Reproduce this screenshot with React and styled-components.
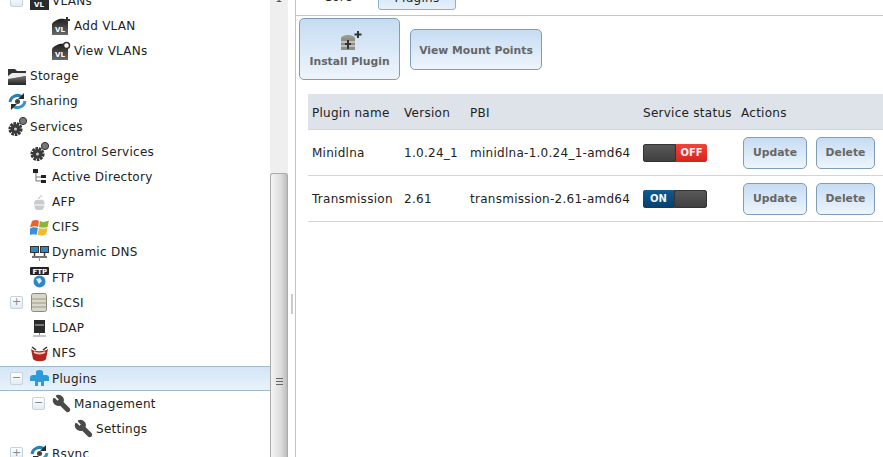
import React from "react";
import styled, { createGlobalStyle } from "styled-components";
import { Wrench } from "lucide-react";

const Global = createGlobalStyle`
  html, body { margin: 0; padding: 0; background: #fff; }
  body { font-family: "DejaVu Sans", Verdana, sans-serif; font-size: 12px; letter-spacing: 0.27px; color: #222; }
`;

const Page = styled.div`
  width: 883px;
  height: 457px;
  display: flex;
  overflow: hidden;
  background: #fff;
`;
const Sidebar = styled.div`
  width: 270px;
  flex: none;
  overflow: hidden;
`;
const TreeList = styled.div`
  margin-top: -12px;
`;
const Row = styled.div`
  height: 25.2px;
  box-sizing: border-box;
  display: flex;
  align-items: center;
  padding-left: ${(p) => p.$indent}px;
  ${(p) => p.$selected && `
    background: linear-gradient(#d3e5f6, #e9f2fb);
    border-top: 1px solid #9fb8d2;
    border-bottom: 1px solid #9fb8d2;
    padding-top: 1px;
  `}
`;
const Expander = styled.span`
  width: 13px;
  height: 13px;
  box-sizing: border-box;
  flex: none;
  margin-right: 7px;
  border: 1px solid #c6d2de;
  border-radius: 2px;
  background: linear-gradient(#fff, #e4ebf2);
  color: #7f8b97;
  font-size: 11px;
  letter-spacing: 0;
  line-height: 10px;
  text-align: center;
`;
const IconSlot = styled.span`
  width: 19px;
  height: 19px;
  flex: none;
  margin-right: 3px;
  display: flex;
  align-items: center;
  justify-content: center;
`;
const Label = styled.span`
  white-space: nowrap;
`;
const Scrollbar = styled.div`
  width: 18px;
  flex: none;
  background: #efefef;
  display: flex;
  flex-direction: column;
  align-items: center;
`;
const ArrowCap = styled.span`
  width: 0;
  height: 0;
  margin-bottom: 171px;
  border-left: 3px solid transparent;
  border-right: 3px solid transparent;
  border-bottom: 2px solid #555;
`;
const Thumb = styled.div`
  width: 100%;
  height: 284px;
  flex: none;
  box-sizing: border-box;
  border: 1px solid #aaa;
  border-bottom: none;
  border-radius: 3px 3px 0 0;
  background: linear-gradient(90deg, #f4f4f4, #dedede 60%, #bdbdbd);
  display: flex;
  align-items: center;
  justify-content: center;
`;
const Grip = styled.span`
  width: 7px;
  height: 8px;
  margin-top: 132px;
  background: repeating-linear-gradient(#666 0 1px, transparent 1px 3px);
`;
const Splitter = styled.div`
  width: 8px;
  flex: none;
  box-sizing: border-box;
  display: flex;
  align-items: center;
  justify-content: center;
  border-right: 1px solid #c4c4c4;
  background: #fff;
`;
const SplitterHandle = styled.span`
  width: 2px;
  height: 20px;
  margin-top: 150px;
  background: #cbcbcb;
`;
const Main = styled.div`
  flex: 1;
  min-width: 0;
  overflow: hidden;
`;
const Tabs = styled.div`
  height: 30px;
  margin-top: -14px;
  box-sizing: border-box;
  display: flex;
  align-items: flex-start;
  gap: 1px;
  padding-left: 3px;
  border-bottom: 1px solid #c4c4c4;
`;
const Tab = styled.div`
  width: 78px;
  height: 24px;
  box-sizing: border-box;
  flex: none;
  text-align: center;
  line-height: 22px;
  ${(p) => p.$active && `
    border: 1px solid #8fb0cc;
    border-radius: 3px;
    background: linear-gradient(#cfe3f6, #e6f0fa);
  `}
`;
const Toolbar = styled.div`
  display: flex;
  align-items: center;
  gap: 10px;
  padding: 2px 0 0 3px;
`;
const ActionButton = styled.button`
  font-family: "DejaVu Sans", Verdana, sans-serif;
  font-size: 10.8px;
  font-weight: bold;
  color: #666;
  border: 1px solid #7d9db8;
  border-radius: 5px;
  background: linear-gradient(#c6dcf2, #eef5fc);
  padding: ${(p) => p.$pt || 0}px 0 0;
  box-sizing: border-box;
  width: ${(p) => p.$w}px;
  height: ${(p) => p.$h}px;
  display: flex;
  flex-direction: column;
  align-items: center;
  justify-content: center;
  white-space: nowrap;
`;
const TableWrap = styled.div`
  margin: 14px 0 0 12px;
`;
const Grid = styled.div`
  display: grid;
  grid-template-columns: 92px 66px 173px 98px 1fr;
  align-items: center;
  box-sizing: border-box;
  height: ${(p) => p.$h}px;
  padding: ${(p) => (p.$head ? "2px" : "0")} 0 0 4px;
  background: ${(p) => (p.$head ? "#dde3e9" : "#fff")};
  border-bottom: 1px solid ${(p) => (p.$head ? "#cfd5db" : "#d4d4d4")};
`;
const Cell = styled.div`
  white-space: nowrap;
`;
const Actions = styled.div`
  display: flex;
  gap: 9px;
  margin-left: 2px;
`;
const Switch = styled.div`
  width: 64px;
  height: 18px;
  border-radius: 3px;
  overflow: hidden;
  display: flex;
  flex-direction: ${(p) => (p.$on ? "row" : "row-reverse")};
  background: #4a4a4a;
`;
const SwitchLabel = styled.span`
  width: 31px;
  background: ${(p) => (p.$on ? "linear-gradient(#0f5a90, #04406c)" : "linear-gradient(#f2443a, #d8231c)")};
  color: #f4f4f4;
  font-size: 10px;
  font-weight: bold;
  letter-spacing: 0;
  line-height: 18px;
  text-align: center;
`;
const SwitchKnob = styled.span`
  flex: 1;
  background: linear-gradient(#5a5a5a, #3e3e3e);
  box-shadow: inset 0 0 0 1px #333;
  border-radius: 3px;
`;
const HiddenDefs = styled.svg`
  position: absolute;
`;

const IconDefs = () => (
  <HiddenDefs width="0" height="0">
    <defs>
      <linearGradient id="vlanFill" x1="0" y1="0" x2="0" y2="1">
        <stop offset="0" stopColor="#1e1e1e" />
        <stop offset="1" stopColor="#6a6a6a" />
      </linearGradient>
      <linearGradient id="folderFill" x1="0" y1="0" x2="0" y2="1">
        <stop offset="0" stopColor="#777" />
        <stop offset="1" stopColor="#222" />
      </linearGradient>
    </defs>
  </HiddenDefs>
);

const Vlan = ({ badge }) => (
  <svg width="19" height="19" viewBox="0 0 19 19">
    {badge ? (
      <path d="M0 8c2-4 9-6 12-5l4 4v12H0z" fill="url(#vlanFill)" />
    ) : (
      <rect x="0" y="0" width="19" height="19" fill="#2b2b2b" />
    )}
    <text x={badge ? 3 : 4} y="16" fontSize="7" fontWeight="bold" letterSpacing="0" fill="#fff" fontFamily="DejaVu Sans">VL</text>
    {badge === "add" && <path d="M15 1v6M12 4h6" stroke="#333" strokeWidth="2" />}
    {badge === "view" && <circle cx="14.500" cy="4.500" r="3" fill="#fff" stroke="#333" strokeWidth="1.500" />}
  </svg>
);
const Folder = () => (
  <svg width="19" height="19" viewBox="0 0 19 19">
    <path d="M0 2h7l2 2h9v14H0z" fill="#333" />
    <path d="M0 9l4-3h14v3L3 12H0z" fill="#ececec" />
    <path d="M0 12l18-3v9H0z" fill="url(#folderFill)" />
  </svg>
);
const Sync = () => (
  <svg width="19" height="19" viewBox="0 0 19 19" fill="none">
    <path d="M2 10a7.500 7.500 0 0 1 12-5" stroke="#2a7fb5" strokeWidth="3" />
    <path d="M17 9a7.500 7.500 0 0 1-12 5" stroke="#3a94c9" strokeWidth="3" />
    <path d="M16 1v6h-6z" fill="#2b2b2b" />
    <path d="M3 18v-6h6z" fill="#2b2b2b" />
    <circle cx="9.500" cy="9.500" r="2.500" fill="#444" />
  </svg>
);
const Gears = () => (
  <svg width="19" height="19" viewBox="0 0 19 19">
    <circle cx="7.500" cy="12" r="5.800" fill="none" stroke="#333" strokeWidth="2.500" strokeDasharray="2.600 .9" />
    <circle cx="7.500" cy="12" r="5" fill="#3a3a3a" />
    <circle cx="7.500" cy="12" r="1.500" fill="#ccc" />
    <circle cx="15" cy="4" r="3.600" fill="#777" stroke="#333" />
  </svg>
);
const Directory = () => (
  <svg width="19" height="19" viewBox="0 0 19 19" fill="none">
    <path d="M6 5v9h8M6 10h8" stroke="#777" />
    <rect x="3" y="2" width="5" height="4" fill="#222" />
    <rect x="11" y="8" width="5" height="3" fill="#222" />
    <rect x="11" y="13" width="5" height="3" fill="#222" />
  </svg>
);
const Apple = () => (
  <svg width="19" height="19" viewBox="0 0 19 19">
    <path d="M4 10c0-3 3-4 5.500-3 2.500-1 5 0 5 3 0 3-1 7-3 7H7c-2 0-3-4-3-7z" fill="#c8cccf" />
    <path d="M4 12h11" stroke="#eceeef" strokeWidth="1.500" />
    <path d="M9 6c0-2 1-3 3-3" stroke="#b0b4b8" fill="none" />
  </svg>
);
const Windows = () => (
  <svg width="19" height="19" viewBox="0 0 19 19">
    <path d="M2 3c3-1.500 5-1 7 0L8 9C6 8 3 8 0 9.500z" fill="#e8622c" />
    <path d="M10 3c3 1.500 5 1 9-.5l-1.500 6.500c-3 1-5.500 1-8.500 0z" fill="#8db53c" />
    <path d="M0 10.500c3-1.500 5-1.500 8-.5l-1.500 7c-2-1-4-1-7.500.5z" fill="#3b8fd6" />
    <path d="M9 10c3 1 5.500 1 8.500 0L16 16.500c-3 1.500-6 1-8.500.5z" fill="#f0bc2e" />
  </svg>
);
const Network = () => (
  <svg width="19" height="19" viewBox="0 0 19 19">
    <rect x=".5" y="3.500" width="8" height="6" fill="#3487bd" stroke="#333" />
    <rect x="10.500" y="3.500" width="8" height="6" fill="#3487bd" stroke="#333" />
    <path d="M4.500 10v3M14.500 10v3M2 14h15" stroke="#444" strokeWidth="1.500" />
    <path d="M9.500 14v4" stroke="#999" />
  </svg>
);
const Ftp = () => (
  <svg width="19" height="21" viewBox="0 0 19 21">
    <rect x="0" y="0" width="19" height="8" rx="1" fill="#222" />
    <text x="2.500" y="7" fontSize="7" fontWeight="bold" letterSpacing="0" fill="#fff" fontFamily="DejaVu Sans">FTP</text>
    <circle cx="9.500" cy="14.500" r="6" fill="#2f86c4" />
    <path d="M6 12l4-1 2 3-3 3z" fill="#d7ecf8" />
  </svg>
);
const Disk = () => (
  <svg width="19" height="19" viewBox="0 0 19 19">
    <rect x="1.500" y=".5" width="15" height="18" rx="2" fill="#d9d7c6" stroke="#8a8a80" />
    <path d="M2 6h14M2 10h14M2 14h14" stroke="#9a9a8e" />
  </svg>
);
const Server = () => (
  <svg width="19" height="19" viewBox="0 0 19 19">
    <rect x="4" y="1" width="11" height="13" fill="#2b2b2b" />
    <rect x="5" y="5" width="9" height="2" fill="#777" />
    <path d="M9.500 14v2M3 17h13" stroke="#888" />
  </svg>
);
const Nfs = () => (
  <svg width="19" height="19" viewBox="0 0 19 19">
    <path d="M1 5c3 3 13 3 17 0l-2 10c-1 3-11 3-13 0z" fill="#b3261e" />
    <path d="M2 3l4 3M17 3l-4 3" stroke="#333" strokeWidth="1.500" />
    <path d="M4 8c3 2 8 2 11 0" stroke="#f1cdc8" strokeWidth="2" fill="none" />
  </svg>
);
const Puzzle = () => (
  <svg width="19" height="19" viewBox="0 0 19 19">
    <path d="M0 9q0-3 3-3h3V3q0-2 3.500-2T13 3v3h3q3 0 3 3v3h-5v5h-3v-4H8v4H5v-5H0z" fill="#2f9ad8" />
  </svg>
);
const MirroredWrench = styled(Wrench)`
  transform: scaleX(-1);
`;
const Spanner = () => <MirroredWrench size={19} color="#4a4a4a" fill="#4a4a4a" />;

const rows = [
  { label: "VLANs", indent: 10, exp: "−", icon: <Vlan /> },
  { label: "Add VLAN", indent: 52, icon: <Vlan badge="add" /> },
  { label: "View VLANs", indent: 52, icon: <Vlan badge="view" /> },
  { label: "Storage", indent: 8, icon: <Folder /> },
  { label: "Sharing", indent: 8, icon: <Sync /> },
  { label: "Services", indent: 8, icon: <Gears /> },
  { label: "Control Services", indent: 30, icon: <Gears /> },
  { label: "Active Directory", indent: 30, icon: <Directory /> },
  { label: "AFP", indent: 30, icon: <Apple /> },
  { label: "CIFS", indent: 30, icon: <Windows /> },
  { label: "Dynamic DNS", indent: 30, icon: <Network /> },
  { label: "FTP", indent: 30, icon: <Ftp /> },
  { label: "iSCSI", indent: 10, exp: "+", icon: <Disk /> },
  { label: "LDAP", indent: 30, icon: <Server /> },
  { label: "NFS", indent: 30, icon: <Nfs /> },
  { label: "Plugins", indent: 10, exp: "−", icon: <Puzzle />, selected: true },
  { label: "Management", indent: 32, exp: "−", icon: <Spanner /> },
  { label: "Settings", indent: 74, icon: <Spanner /> },
  { label: "Rsync", indent: 10, exp: "+", icon: <Sync /> },
];

const plugins = [
  { name: "Minidlna", version: "1.0.24_1", pbi: "minidlna-1.0.24_1-amd64", on: false },
  { name: "Transmission", version: "2.61", pbi: "transmission-2.61-amd64", on: true },
];

export default function App() {
  return (
    <Page>
      <Global />
      <IconDefs />
      <Sidebar>
        <TreeList>
          {rows.map((r) => (
            <Row key={r.label} $indent={r.indent} $selected={r.selected}>
              {r.exp && <Expander>{r.exp}</Expander>}
              <IconSlot>{r.icon}</IconSlot>
              <Label>{r.label}</Label>
            </Row>
          ))}
        </TreeList>
      </Sidebar>
      <Scrollbar>
        <ArrowCap />
        <Thumb><Grip /></Thumb>
      </Scrollbar>
      <Splitter><SplitterHandle /></Splitter>
      <Main>
        <Tabs>
          <Tab>Core</Tab>
          <Tab $active>Plugins</Tab>
        </Tabs>
        <Toolbar>
          <ActionButton $w={101} $h={62}>
            <svg width="24" height="24" viewBox="0 2 24 24">
              <ellipse cx="10" cy="9" rx="7" ry="3" fill="#9a9a90" />
              <rect x="3" y="9" width="14" height="12" fill="#8f8f86" />
              <path d="M3 13h14M3 17h14" stroke="#f0f0f0" />
              <path d="M10 11v9M7 15h6" stroke="#333" strokeWidth="2" />
              <path d="M20 2v7M16.500 5.500h7" stroke="#333" strokeWidth="2" />
            </svg>
            Install Plugin
          </ActionButton>
          <ActionButton $w={132} $h={41} $pt={2}>View Mount Points</ActionButton>
        </Toolbar>
        <TableWrap>
          <Grid $head $h={36}>
            <Cell>Plugin name</Cell>
            <Cell>Version</Cell>
            <Cell>PBI</Cell>
            <Cell>Service status</Cell>
            <Cell>Actions</Cell>
          </Grid>
          {plugins.map((p) => (
            <Grid key={p.name} $h={46}>
              <Cell>{p.name}</Cell>
              <Cell>{p.version}</Cell>
              <Cell>{p.pbi}</Cell>
              <Switch $on={p.on}>
                <SwitchLabel $on={p.on}>{p.on ? "ON" : "OFF"}</SwitchLabel>
                <SwitchKnob />
              </Switch>
              <Actions>
                <ActionButton $w={64} $h={32}>Update</ActionButton>
                <ActionButton $w={59} $h={32}>Delete</ActionButton>
              </Actions>
            </Grid>
          ))}
        </TableWrap>
      </Main>
    </Page>
  );
}
